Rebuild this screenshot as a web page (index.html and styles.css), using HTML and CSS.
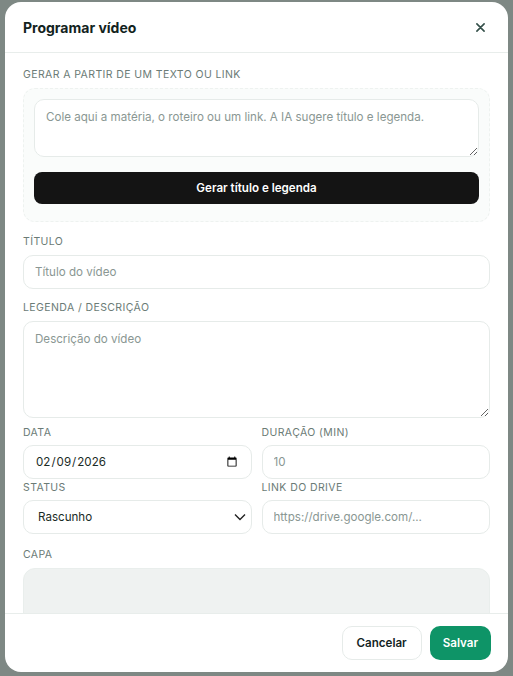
FILE: index.html
```html
<!DOCTYPE html>
<html lang="pt-BR">
<head>
  <meta charset="UTF-8">
  <meta name="viewport" content="width=device-width, initial-scale=1.0">
  <title>Programar vídeo</title>
  <link rel="stylesheet" href="styles.css">
</head>
<body>
  <div class="modal">
    <div class="modal-header">
      <h2>Programar vídeo</h2>
      <button class="close-btn" type="button" aria-label="Fechar">
        <svg width="9" height="9" viewBox="0 0 10 10"><path d="M1 1L9 9M9 1L1 9" stroke="#35504a" stroke-width="1.8" stroke-linecap="round"/></svg>
      </button>
    </div>

    <div class="modal-body">
      <div class="field">
        <label>Gerar a partir de um texto ou link</label>
        <div class="ai-box">
          <textarea class="input ai-text" placeholder="Cole aqui a matéria, o roteiro ou um link. A IA sugere título e legenda."></textarea>
          <button class="btn-dark" type="button">Gerar título e legenda</button>
        </div>
      </div>

      <div class="field field-title">
        <label>Título</label>
        <input class="input" type="text" placeholder="Título do vídeo">
      </div>

      <div class="field field-desc">
        <label>Legenda / Descrição</label>
        <textarea class="input desc" placeholder="Descrição do vídeo"></textarea>
      </div>

      <div class="grid">
        <div class="field small">
          <label>Data</label>
          <input class="input" type="date" value="2026-02-09">
        </div>
        <div class="field small">
          <label>Duração (min)</label>
          <input class="input" type="text" placeholder="10">
        </div>
        <div class="field small">
          <label>Status</label>
          <select class="input select">
            <option>Rascunho</option>
            <option>Agendado</option>
            <option>Publicado</option>
          </select>
        </div>
        <div class="field small">
          <label>Link do drive</label>
          <input class="input" type="text" placeholder="https://drive.google.com/...">
        </div>
      </div>

      <div class="field">
        <label>Capa</label>
        <div class="cover"></div>
      </div>
    </div>

    <div class="modal-footer">
      <button class="btn-light" type="button">Cancelar</button>
      <button class="btn-green" type="button">Salvar</button>
    </div>
  </div>
</body>
</html>
```

FILE: styles.css
```css
* {
  box-sizing: border-box;
}

body {
  margin: 0;
  height: 676px;
  padding: 2px 5px 4px;
  background: #7e8884;
  font-family: Inter, "Noto Sans", sans-serif;
  color: #13251f;
  overflow: hidden;
}

.modal {
  height: 670px;
  background: #fff;
  border-radius: 16px;
  display: flex;
  flex-direction: column;
  overflow: hidden;
}

.modal-header {
  height: 51px;
  flex-shrink: 0;
  display: flex;
  align-items: center;
  justify-content: space-between;
  padding: 0 19px 0 18px;
  border-bottom: 1px solid #e8edeb;
}

.modal-header h2 {
  margin: 0;
  font-size: 14px;
  font-weight: 700;
  color: #12231d;
}

.close-btn {
  border: 0;
  background: none;
  padding: 4px;
  cursor: pointer;
  display: flex;
}

.modal-body {
  flex: 1;
  overflow: hidden;
  padding: 15px 18px 0;
}

.field {
  display: flex;
  flex-direction: column;
  margin-bottom: 13px;
}

.field.field-title {
  margin-bottom: 12px;
}

.field.field-desc {
  margin-bottom: 8px;
}

.field.small {
  margin-bottom: 0;
}

label {
  font-size: 10.5px;
  letter-spacing: 0.4px;
  text-transform: uppercase;
  color: #6b7b76;
  line-height: 14px;
  margin-bottom: 6px;
}

.field.small label {
  margin-bottom: 5px;
}

.input {
  width: 100%;
  height: 34px;
  border: 1px solid #e6ebe9;
  border-radius: 10px;
  background: #fff;
  padding: 0 11px;
  font-family: inherit;
  font-size: 11.6px;
  color: #1a2b26;
  outline: none;
}

.input::placeholder {
  color: #8a9793;
}

textarea.input {
  padding: 8px 11px;
  resize: vertical;
  line-height: 18px;
}

.ai-box {
  border: 1px dashed #eef2f0;
  border-radius: 12px;
  background: #fafcfb;
  padding: 10px 10px 17px;
  display: flex;
  flex-direction: column;
  gap: 15px;
}

.ai-text {
  height: 58px;
}

.btn-dark {
  height: 32px;
  border: 0;
  border-radius: 8px;
  background: #141414;
  color: #fff;
  font-family: inherit;
  font-size: 11.6px;
  font-weight: 600;
}

.desc {
  height: 97px;
}

.grid {
  display: grid;
  grid-template-columns: 1fr 1fr;
  column-gap: 10px;
  row-gap: 2px;
  margin-bottom: 14px;
}

.select {
  appearance: none;
  padding-left: 14px;
  background-image: url("data:image/svg+xml,%3Csvg xmlns='http://www.w3.org/2000/svg' width='12' height='8' viewBox='0 0 12 8'%3E%3Cpath d='M1 1.5L6 6.5L11 1.5' fill='none' stroke='%23222' stroke-width='1.4'/%3E%3C/svg%3E");
  background-repeat: no-repeat;
  background-position: right 5px center;
}

.cover {
  height: 120px;
  border-radius: 12px;
  background: #eff2f1;
  border: 1px solid #e9eeec;
}

.modal-footer {
  flex-shrink: 0;
  height: 59px;
  border-top: 1px solid #e8edeb;
  display: flex;
  justify-content: flex-end;
  align-items: center;
  gap: 8px;
  padding: 0 17px 0 18px;
}

.btn-light,
.btn-green {
  height: 34px;
  border-radius: 10px;
  font-family: inherit;
  font-size: 11.6px;
  font-weight: 600;
}

.btn-light {
  background: #fff;
  border: 1px solid #e6ebe9;
  color: #13251f;
  padding: 0 14px;
}

.btn-green {
  background: #0e9467;
  border: 0;
  color: #fff;
  padding: 0 13px;
}
```
